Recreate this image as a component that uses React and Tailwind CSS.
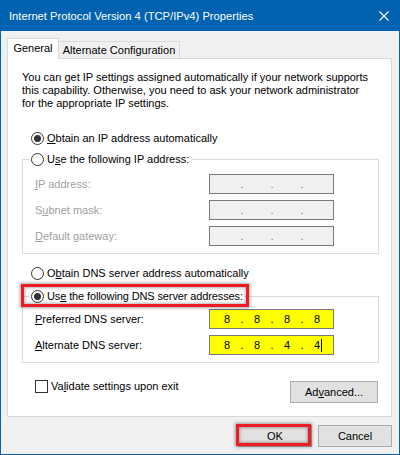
import React from "react";

const Radio = ({ checked }) => (
  <span className="flex h-[13px] w-[13px] shrink-0 items-center justify-center rounded-full border border-[#333333] bg-white">
    {checked && <span className="h-[7px] w-[7px] rounded-full bg-[#333333]" />}
  </span>
);

const IpBox = ({ values = ["", "", "", ""], active, caret }) => {
  const dotColor = active ? "text-black" : "text-[#7878A0]";
  return (
    <div
      className={
        active
          ? "flex h-[20px] w-[125px] items-center border border-[#7A7A7A] bg-[#FFFF00] pl-[5px]"
          : "flex h-[20px] w-[125px] items-center border border-[#7A7A7A] bg-[#F0F0F0] pl-[5px]"
      }
    >
      {values.map((v, i) => (
        <React.Fragment key={i}>
          <span className="flex w-[24px] justify-center">
            <span className="relative">
              {v}
              {caret && i === 3 && (
                <span className="absolute left-full top-[0px] ml-[1px] h-[13px] w-px bg-black" />
              )}
            </span>
          </span>
          {i < 3 && <span className={`w-[6px] text-center ${dotColor}`}>.</span>}
        </React.Fragment>
      ))}
    </div>
  );
};

const FieldRow = ({ label, disabled, values, caret }) => (
  <div className="ml-[5px] flex h-[20px] items-center">
    <span className={disabled ? "w-[174px] text-[#A0A0A0]" : "w-[174px]"}>{label}</span>
    <IpBox values={values} active={!disabled} caret={caret} />
  </div>
);

const Button = ({ children, className = "" }) => (
  <button
    className={`flex h-[22px] items-center justify-center border border-[#ADADAD] bg-[#E1E1E1] ${className}`}
  >
    {children}
  </button>
);

export default function App() {
  return (
    <div className="h-[455px] w-[400px] whitespace-nowrap border border-[#0063B1] bg-[#F0F0F0] font-['Liberation_Sans',Arial,sans-serif] text-[11px] leading-[13px] text-black">
      {/* title bar */}
      <div className="flex h-[30px] items-center justify-between bg-[#0063B1] pl-[8px] pr-[10px] text-[11.2px] text-white">
        <span>Internet Protocol Version 4 (TCP/IPv4) Properties</span>
        <svg width="10" height="10" viewBox="0 0 10 10">
          <path d="M0.5 0.5 L9.5 9.5 M9.5 0.5 L0.5 9.5" stroke="white" strokeWidth="1.1" />
        </svg>
      </div>

      <div className="pl-[6px] pr-[7px] pt-[7px]">
        {/* tabs */}
        <div className="relative z-10 flex h-[20px] items-end">
          <div className="flex h-[21px] w-[52px] items-center justify-center self-start border border-b-0 border-[#D9D9D9] bg-white pb-[1px]">
            General
          </div>
          <div className="flex h-[17px] w-[121px] items-center justify-center border-r border-t border-[#D9D9D9] bg-[#F0F0F0]">
            Alternate Configuration
          </div>
        </div>

        {/* panel */}
        <div className="h-[359px] border border-[#D9D9D9] bg-white pl-[14px] pr-[12px] pt-[12px]">
          <p>
            You can get IP settings assigned automatically if your network supports
            <br />
            this capability. Otherwise, you need to ask your network administrator
            <br />
            for the appropriate IP settings.
          </p>

          <div className="ml-[9px] mt-[22px] flex items-center gap-[3px]">
            <Radio checked />
            <span>
              <u>O</u>btain an IP address automatically
            </span>
          </div>

          <fieldset className="mt-[8px] border border-[#DCDCDC] px-[7px] pb-[7px]">
            <legend className="pl-[1px] pr-[2px]">
              <span className="flex items-center gap-[3px]">
                <Radio />
                <span>
                  U<u>s</u>e the following IP address:
                </span>
              </span>
            </legend>
            <div className="mt-[8px] flex flex-col gap-[6px]">
              <FieldRow disabled label={<><u>I</u>P address:</>} />
              <FieldRow disabled label={<>S<u>u</u>bnet mask:</>} />
              <FieldRow disabled label={<><u>D</u>efault gateway:</>} />
            </div>
          </fieldset>

          <div className="ml-[9px] mt-[13px] flex items-center gap-[3px]">
            <Radio />
            <span>
              O<u>b</u>tain DNS server address automatically
            </span>
          </div>

          <fieldset className="mt-[10px] border border-[#DCDCDC] px-[7px] pb-[7px]">
            <legend className="pl-[1px] pr-[2px]">
              <span className="relative flex items-center gap-[3px]">
                <Radio checked />
                <span className="tracking-[-0.12px]">
                  Us<u>e</u> the following DNS server addresses:
                </span>
                <span className="pointer-events-none absolute -left-[10px] -top-[6px] h-[23px] w-[228px] border-[3px] border-[#ED1C24] shadow-[0_0_3px_1px_rgba(0,0,0,0.35),inset_0_0_3px_1px_rgba(0,0,0,0.3)]" />
              </span>
            </legend>
            <div className="mt-[6px] flex flex-col gap-[6px]">
              <FieldRow label={<><u>P</u>referred DNS server:</>} values={["8", "8", "8", "8"]} />
              <FieldRow label={<><u>A</u>lternate DNS server:</>} values={["8", "8", "4", "4"]} caret />
            </div>
          </fieldset>

          <div className="flex items-start justify-between">
            <div className="ml-[13px] mt-[17px] flex items-center gap-[3px]">
              <span className="h-[13px] w-[13px] border border-[#333333] bg-white" />
              <span>
                Va<u>l</u>idate settings upon exit
              </span>
            </div>
            <Button className="mr-[1px] mt-[18px] h-[21px] w-[88px]">
              Ad<u>v</u>anced...
            </Button>
          </div>
        </div>

        {/* dialog buttons */}
        <div className="mt-[8px] flex justify-end gap-[6px]">
          <div className="relative">
            <Button className="w-[74px]">OK</Button>
            <span className="pointer-events-none absolute -left-[2px] -top-[1px] bottom-[1px] right-[1px] border-[3px] border-[#ED1C24] shadow-[0_0_3px_1px_rgba(0,0,0,0.35),inset_0_0_3px_1px_rgba(0,0,0,0.3)]" />
          </div>
          <Button className="w-[74px]">Cancel</Button>
        </div>
      </div>
    </div>
  );
}
